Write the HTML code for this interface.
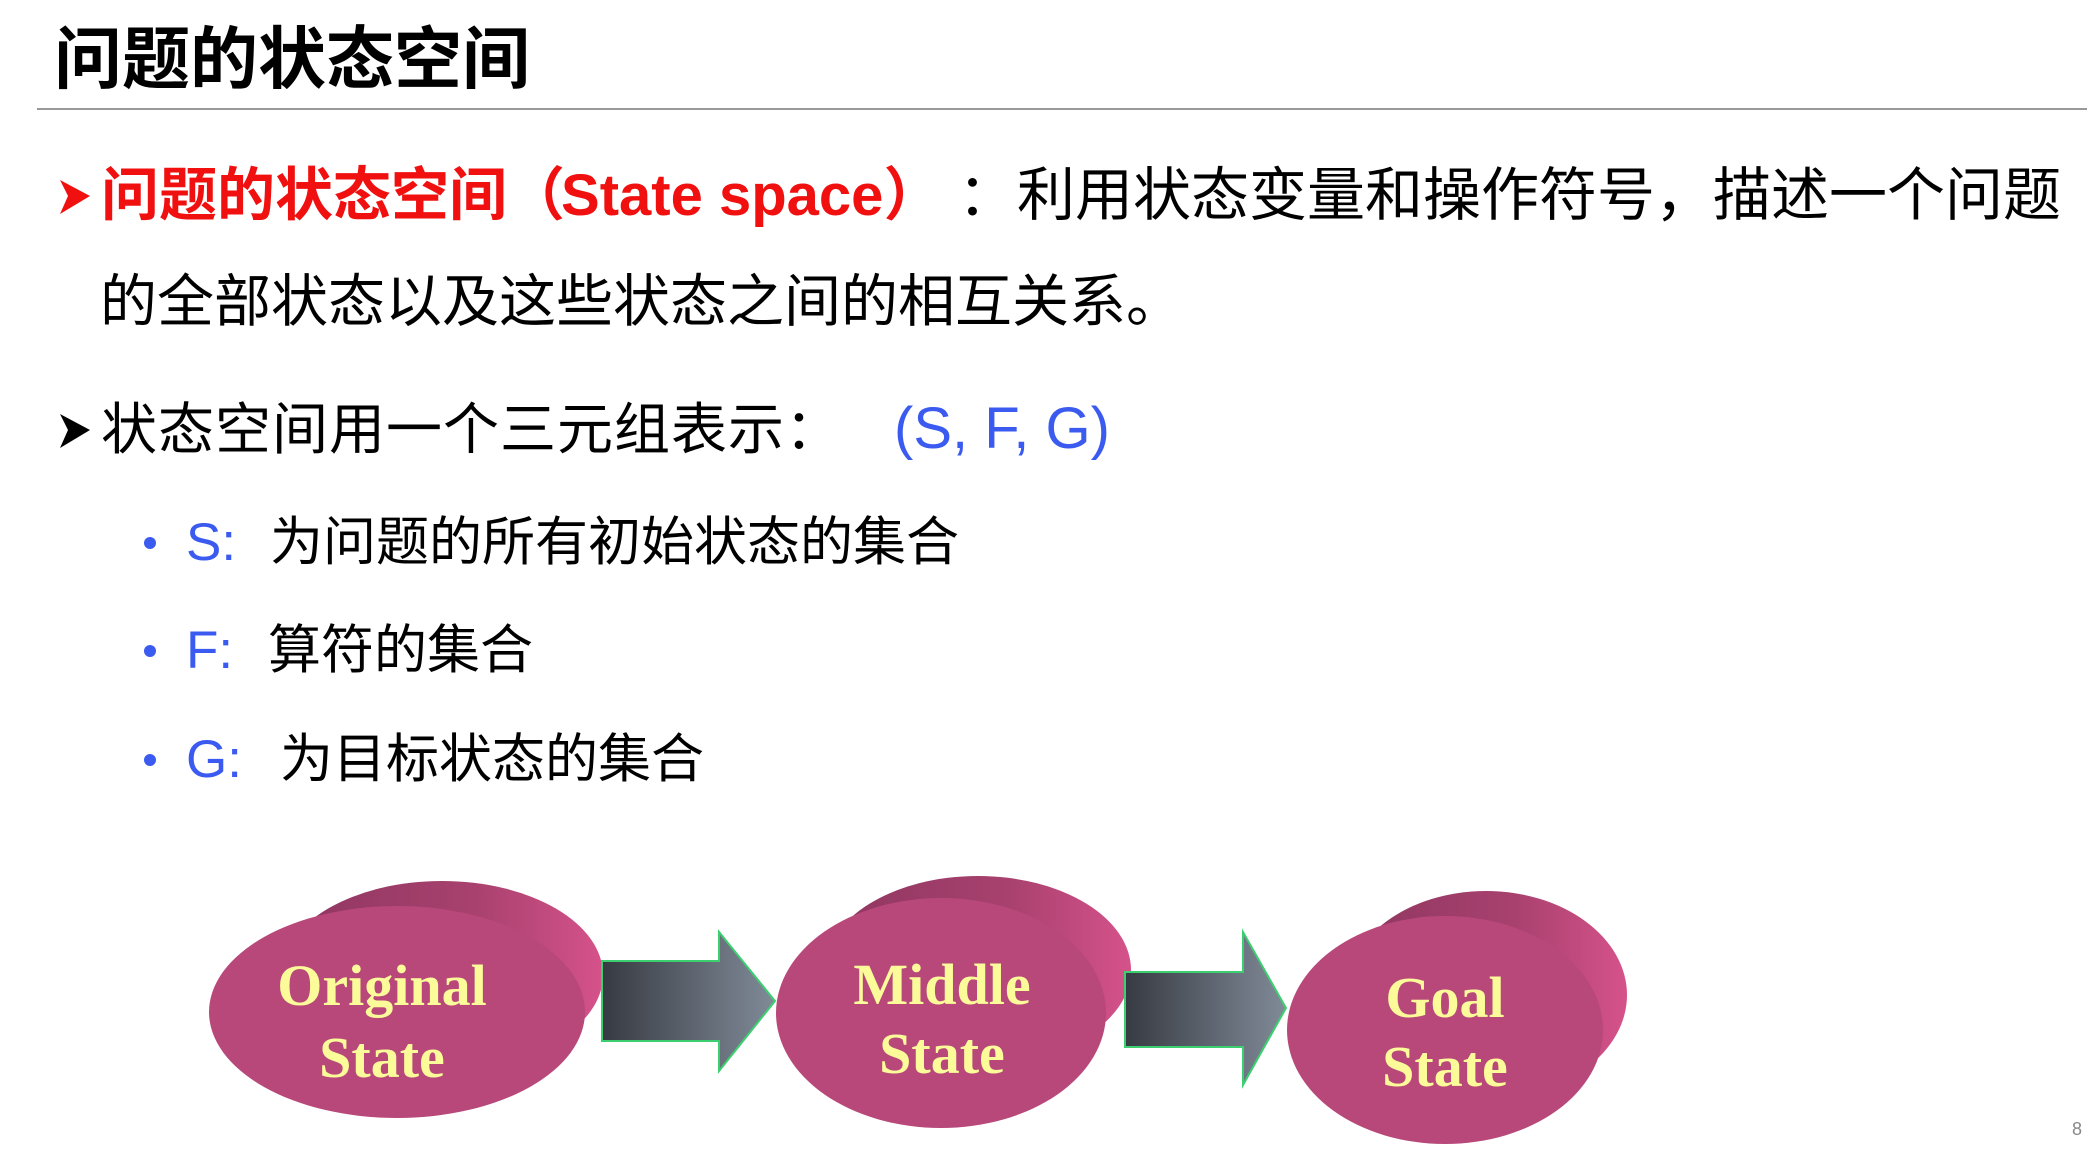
<!DOCTYPE html>
<html><head><meta charset="utf-8"><style>
html,body{margin:0;padding:0;background:#fff;}
body{width:2087px;height:1150px;position:relative;overflow:hidden;font-family:"Liberation Sans","Noto Sans CJK SC",sans-serif;}
.t{position:absolute;white-space:nowrap;line-height:1;}
</style></head><body>
<div class="t" style="left:54px;top:26px;font-size:68px;font-weight:bold;color:#000;">问题的状态空间</div>
<div style="position:absolute;left:37px;top:108px;width:2050px;height:2px;background:#999;"></div>

<svg style="position:absolute;left:0;top:0" width="2087" height="1150">
<defs>
<linearGradient id="ag" x1="0" x2="1" y1="0" y2="0"><stop offset="0" stop-color="#373a42"/><stop offset="1" stop-color="#808b98"/></linearGradient>
<linearGradient id="bg" x1="0" x2="1" y1="0" y2="0"><stop offset="0" stop-color="#8e3660"/><stop offset="0.6" stop-color="#a8416e"/><stop offset="1" stop-color="#d5528a"/></linearGradient>
</defs>
<polygon points="60,180 90,196 60,214 68,196" fill="#f01010"/>
<polygon points="60,414 90,430 60,448 68,430" fill="#000"/>
<ellipse cx="442" cy="975" rx="161" ry="94" fill="url(#bg)"/>
<ellipse cx="397" cy="1012" rx="188" ry="106" fill="#b8487a"/>
<polygon points="602,961 719,961 719,932 775,1001 719,1071 719,1041 602,1041" fill="url(#ag)" stroke="#3ccf70" stroke-width="2"/>
<ellipse cx="978" cy="970" rx="153" ry="94" fill="url(#bg)"/>
<ellipse cx="941" cy="1013" rx="165" ry="115" fill="#b8487a"/>
<polygon points="1125,972 1243,972 1243,932 1286,1008 1243,1085 1243,1047 1125,1047" fill="url(#ag)" stroke="#3ccf70" stroke-width="2"/>
<ellipse cx="1486" cy="995" rx="141" ry="104" fill="url(#bg)"/>
<ellipse cx="1445" cy="1030" rx="158" ry="114" fill="#b8487a"/>
<g font-family="Liberation Serif, serif" font-weight="bold" font-size="58" fill="#fbfb9a" text-anchor="middle">
<text x="382" y="1005">Original</text><text x="382" y="1077">State</text>
<text x="942" y="1004">Middle</text><text x="942" y="1073">State</text>
<text x="1445" y="1017">Goal</text><text x="1445" y="1086">State</text>
</g>
<circle cx="150" cy="543" r="6" fill="#3b5bf0"/>
<circle cx="150" cy="651" r="6" fill="#3b5bf0"/>
<circle cx="150" cy="760" r="6" fill="#3b5bf0"/>
</svg>

<div class="t" style="left:101px;top:167px;font-size:58px;font-weight:bold;color:#f01010;">问题的状态空间<span style="letter-spacing:-4px">（</span>State space<span>）</span></div>
<div class="t" style="left:958px;top:167px;font-size:58px;color:#000;">：</div>
<div class="t" style="left:1017px;top:167px;font-size:58px;color:#000;">利用状态变量和操作符号，描述一个问题</div>
<div class="t" style="left:100px;top:274px;font-size:57px;color:#000;">的全部状态以及这些状态之间的相互关系。</div>
<div class="t" style="left:101px;top:402px;font-size:56px;color:#000;letter-spacing:1px;">状态空间用一个三元组表示：</div>
<div class="t" style="left:894px;top:400px;font-size:58px;color:#3b5bf0;">(S, F, G)</div>

<div class="t" style="left:186px;top:516px;font-size:53px;color:#3b5bf0;">S:</div>
<div class="t" style="left:270px;top:516px;font-size:53px;color:#000;">为问题的所有初始状态的集合</div>
<div class="t" style="left:186px;top:624px;font-size:53px;color:#3b5bf0;">F:</div>
<div class="t" style="left:268px;top:624px;font-size:53px;color:#000;">算符的集合</div>
<div class="t" style="left:186px;top:733px;font-size:53px;color:#3b5bf0;">G:</div>
<div class="t" style="left:280px;top:733px;font-size:53px;color:#000;">为目标状态的集合</div>
<div class="t" style="left:2072px;top:1120px;font-size:18px;color:#888;">8</div>
</body></html>
